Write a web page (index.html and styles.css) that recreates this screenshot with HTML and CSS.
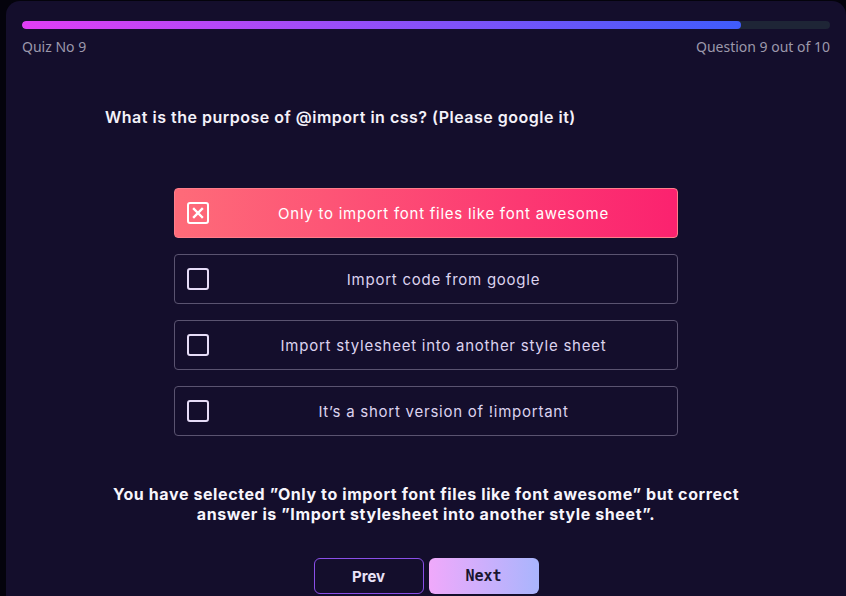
FILE: index.html
```html
<!DOCTYPE html>
<html>
<head>
<meta charset="utf-8">
<link rel="stylesheet" href="styles.css">
</head>
<body>
<div class="card">
  <div class="track"><div class="fill" style="width:89%"></div></div>
  <div class="meta">
    <span>Quiz No 9</span>
    <span>Question 9 out of 10</span>
  </div>
  <h2 class="question">What is the purpose of @import in css? (Please google it)</h2>
  <div class="options">
    <div class="option selected">
      <span class="box"><svg viewBox="0 0 22 22" width="22" height="22"><path d="M7 7 L15 15 M15 7 L7 15" stroke="#fff" stroke-width="2.4" stroke-linecap="square"/></svg></span>
      <span class="label">Only to import font files like font awesome</span>
    </div>
    <div class="option">
      <span class="box"></span>
      <span class="label">Import code from google</span>
    </div>
    <div class="option">
      <span class="box"></span>
      <span class="label">Import stylesheet into another style sheet</span>
    </div>
    <div class="option">
      <span class="box"></span>
      <span class="label">It’s a short version of !important</span>
    </div>
  </div>
  <p class="result">You have selected ”Only to import font files like font awesome” but correct answer is ”Import stylesheet into another style sheet”.</p>
  <div class="buttons">
    <button class="btn prev">Prev</button>
    <button class="btn next">Next</button>
  </div>
</div>
</body>
</html>
```
FILE: styles.css
```css
html, body {
  margin: 0;
  padding: 0;
  background: #04030c;
  overflow: hidden;
}
body {
  font-family: Inter, "Noto Sans", sans-serif;
}
.card {
  margin: 1px 0 0 6px;
  width: 840px;
  height: 640px;
  box-sizing: border-box;
  background: #140e2c;
  border-radius: 14px;
  padding: 20px 16px;
}
.track {
  height: 8px;
  border-radius: 4px;
  background: #1e2536;
  overflow: hidden;
}
.fill {
  height: 100%;
  border-radius: 4px;
  background: linear-gradient(90deg, #e13ef5, #a04cf8 40%, #3f5cfb);
}
.meta {
  display: flex;
  justify-content: space-between;
  margin-top: 8px;
  font-family: "Noto Sans", sans-serif;
  font-size: 14px;
  color: #9c98ab;
  line-height: 19px;
}
.question {
  margin: 51px 0 0 83px;
  font-size: 16px;
  font-weight: 600;
  letter-spacing: 0.5px;
  color: #f4f2fa;
  line-height: 20px;
}
.options {
  width: 504px;
  margin: 61px auto 0;
  display: flex;
  flex-direction: column;
  gap: 16px;
}
.option {
  height: 50px;
  box-sizing: border-box;
  border: 1px solid #5a5370;
  border-radius: 4px;
  display: flex;
  align-items: center;
  padding: 0 12px;
  gap: 13px;
  color: #dcd3ef;
  font-size: 15px;
  letter-spacing: 0.75px;
}
.option.selected {
  border-color: #ff7d8a;
  background: linear-gradient(90deg, #fe6b79, #fb226f);
  color: #fff;
}
.box {
  width: 22px;
  height: 22px;
  box-sizing: border-box;
  border: 2px solid #e6dcf7;
  border-radius: 3px;
  flex: none;
  position: relative;
}
.selected .box {
  border-color: #fff;
}
.box svg {
  position: absolute;
  left: -2px;
  top: -2px;
}
.label {
  flex: 1;
  text-align: center;
}
.result {
  margin: 48px auto 0;
  width: 660px;
  text-align: center;
  font-size: 16px;
  font-weight: 700;
  letter-spacing: 0.6px;
  line-height: 20px;
  color: #f7f5fc;
}
.buttons {
  display: flex;
  justify-content: center;
  gap: 5px;
  margin-top: 34px;
}
.btn {
  width: 110px;
  height: 36px;
  border-radius: 6px;
  font-size: 15px;
  font-weight: 700;
  cursor: pointer;
}
.prev {
  background: transparent;
  border: 1px solid #8a4fe8;
  color: #e9e2f7;
  font-family: Inter, sans-serif;
}
.next {
  border: none;
  background: linear-gradient(90deg, #f0a9fb, #a9b5fd);
  color: #1a1530;
  font-family: "DejaVu Sans Mono", monospace;
  font-weight: 600;
}
```
